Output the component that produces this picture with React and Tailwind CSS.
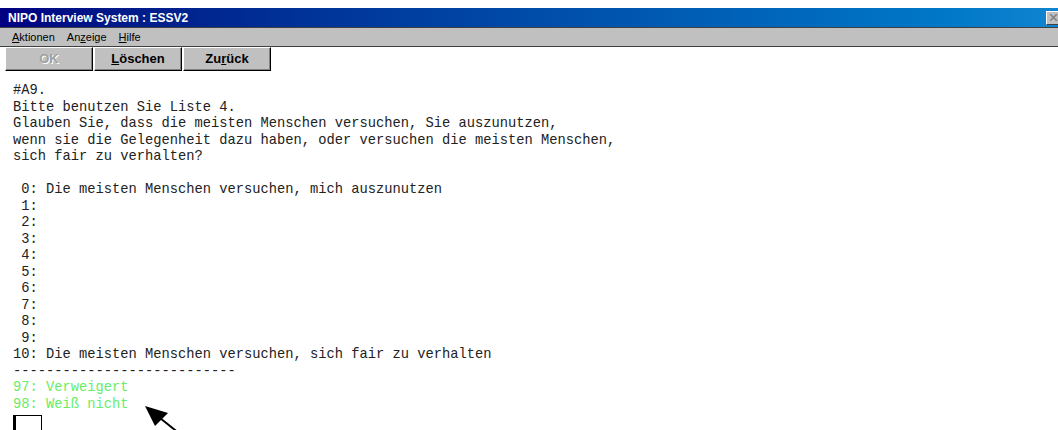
const QUESTION = [
  '#A9.',
  'Bitte benutzen Sie Liste 4.',
  'Glauben Sie, dass die meisten Menschen versuchen, Sie auszunutzen,',
  'wenn sie die Gelegenheit dazu haben, oder versuchen die meisten Menschen,',
  'sich fair zu verhalten?',
  '',
]

const SCALE = [
  ' 0: Die meisten Menschen versuchen, mich auszunutzen',
  ' 1:',
  ' 2:',
  ' 3:',
  ' 4:',
  ' 5:',
  ' 6:',
  ' 7:',
  ' 8:',
  ' 9:',
  '10: Die meisten Menschen versuchen, sich fair zu verhalten',
  '---------------------------',
]

const SPECIAL = ['97: Verweigert', '98: Weiß nicht']

function Hotkey({ children }) {
  return <span className="underline underline-offset-[1px]">{children}</span>
}

function ToolButton({ children, disabled }) {
  return (
    <div
      className={`flex items-center justify-center w-[88px] h-[24px] bg-[#c0c0c0] border-t border-l border-t-white border-l-white border-r border-b border-r-black border-b-black shadow-[inset_-1px_-1px_0_#808080] text-[13px] font-bold ${
        disabled ? 'text-[#a0a0a0] [text-shadow:1px_1px_0_#ffffff]' : 'text-black'
      }`}
    >
      {children}
    </div>
  )
}

export default function App() {
  return (
    <div
      className="relative w-[1058px] h-[430px] overflow-hidden bg-white"
      style={{ fontFamily: '"Liberation Sans", Arial, sans-serif' }}
    >
      {/* window caption */}
      <div className="mt-[8px] h-[19px] flex items-center justify-between pl-[8px] bg-linear-to-r from-[#000080] to-[#1084d0]">
        <span className="text-white font-bold text-[12px]">NIPO Interview System : ESSV2</span>
        <div className="w-[16px] h-[14px] mr-[-4px] bg-[#c0c0c0] border-t border-l border-white border-r border-b border-r-[#404040] border-b-[#404040] flex items-center justify-center">
          <svg width="8" height="7" viewBox="0 0 8 7">
            <path d="M0 0 L7 7 M7 0 L0 7" stroke="#808080" strokeWidth="1.5" />
          </svg>
        </div>
      </div>

      {/* menu bar */}
      <div className="h-[20px] flex items-center gap-[12px] pl-[12px] bg-[#c0c0c0] border-t border-b border-[#404040] text-[11px] text-black">
        <span><Hotkey>A</Hotkey>ktionen</span>
        <span>An<Hotkey>z</Hotkey>eige</span>
        <span><Hotkey>H</Hotkey>ilfe</span>
      </div>

      {/* toolbar */}
      <div className="flex pl-[5px] gap-[1px]">
        <ToolButton disabled>OK</ToolButton>
        <ToolButton>
          <span><Hotkey>L</Hotkey>öschen</span>
        </ToolButton>
        <ToolButton>
          <span>Zu<Hotkey>r</Hotkey>ück</span>
        </ToolButton>
      </div>

      {/* question screen */}
      <div
        className="pl-[13px] pt-[12px] text-[13.75px] leading-[16.5px] text-[#222222] whitespace-pre"
        style={{ fontFamily: '"Liberation Mono", "Courier New", monospace' }}
      >
        {QUESTION.concat(SCALE).map((line, i) => (
          <div key={i} className="h-[16.5px]">{line}</div>
        ))}
        {SPECIAL.map((line) => (
          <div key={line} className="h-[16.5px] text-[#66ee66]">{line}</div>
        ))}
        <div className="mt-[2px] w-[29px] h-[24px] border border-black border-l-[3px] bg-white" />
      </div>

      {/* pointer arrow */}
      <svg className="absolute left-[140px] top-[400px]" width="50" height="30" viewBox="0 0 50 30">
        <path d="M5 6 L28 13 L15 26 Z" fill="#000" />
        <path d="M20 18 L40 34" stroke="#000" strokeWidth="2" />
      </svg>
    </div>
  )
}
